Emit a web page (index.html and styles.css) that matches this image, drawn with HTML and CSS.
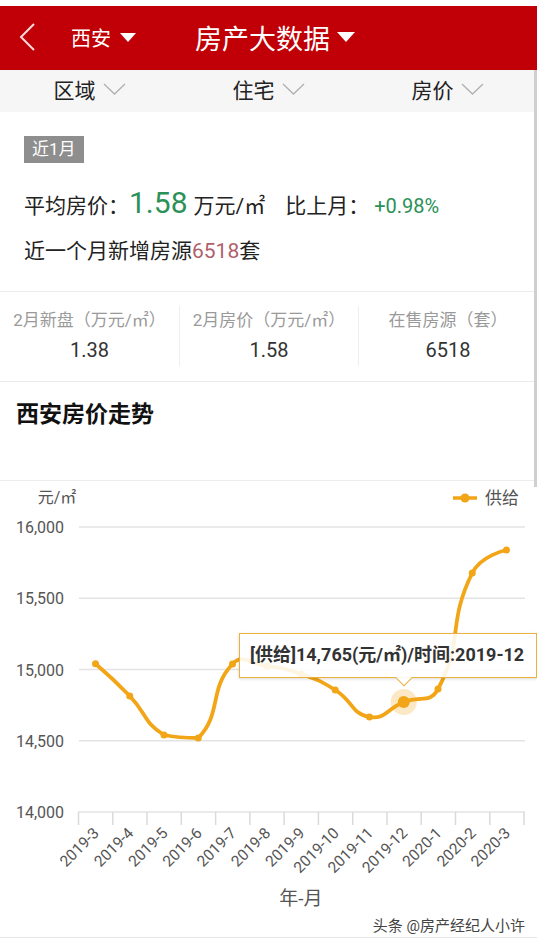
FILE: index.html
```html
<html><head>
<meta charset="utf-8">
<title>房产大数据</title>
<link rel="stylesheet" href="styles.css">
</head><body>
<div class="page">

<div class="statusgap"></div>

<header class="nav">
  <svg class="back" width="18" height="28" viewBox="0 0 18 28"><path d="M16 1 L3 14 L16 27"/></svg>
  <div class="city">西安<span class="caret"></span></div>
  <div class="title">房产大数据<span class="caret big"></span></div>
</header>

<div class="tabs">
  <div class="tab">区域<svg class="chev" width="23" height="12" viewBox="0 0 23 12"><path d="M1 1 L11.5 11 L22 1"/></svg></div>
  <div class="tab">住宅<svg class="chev" width="23" height="12" viewBox="0 0 23 12"><path d="M1 1 L11.5 11 L22 1"/></svg></div>
  <div class="tab">房价<svg class="chev" width="23" height="12" viewBox="0 0 23 12"><path d="M1 1 L11.5 11 L22 1"/></svg></div>
</div>

<div class="summary">
  <span class="tag">近1月</span>
  <div class="avg">平均房价：<span class="avg-num">1.58</span><span class="avg-unit">万元/㎡</span><span class="vs">比上月：</span><span class="pct">+0.98%</span></div>
  <div class="count">近一个月新增房源<span class="count-num">6518</span>套</div>
</div>

<div class="stats">
  <div class="stat"><div class="stat-label">2月新盘（万元/㎡）</div><div class="stat-value">1.38</div></div>
  <div class="stat"><div class="stat-label">2月房价（万元/㎡）</div><div class="stat-value">1.58</div></div>
  <div class="stat"><div class="stat-label">在售房源（套）</div><div class="stat-value">6518</div></div>
</div>

<div class="trend-title">西安房价走势</div>

<div class="chart">
  <svg class="plot" width="537" height="456" viewBox="0 480 537 456">
    <text class="unit" x="57" y="502" text-anchor="middle">元/㎡</text>
    <line class="legend-line" x1="453" y1="497" x2="477" y2="497"/>
    <circle class="dot" cx="465" cy="497" r="4.5"/>
    <text class="legend-text" x="485" y="503">供给</text>

    <line class="grid" x1="79" y1="526" x2="525" y2="526"/>
    <line class="grid" x1="79" y1="597.25" x2="525" y2="597.25"/>
    <line class="grid" x1="79" y1="668.5" x2="525" y2="668.5"/>
    <line class="grid" x1="79" y1="739.75" x2="525" y2="739.75"/>
    <line class="grid" x1="78" y1="811" x2="525" y2="811"/>

    <text class="ylabel" x="64" y="532" text-anchor="end">16,000</text>
    <text class="ylabel" x="64" y="603" text-anchor="end">15,500</text>
    <text class="ylabel" x="64" y="674.5" text-anchor="end">15,000</text>
    <text class="ylabel" x="64" y="745.5" text-anchor="end">14,500</text>
    <text class="ylabel" x="64" y="817" text-anchor="end">14,000</text>

    <g class="ticks">
      <line x1="78.5" y1="811" x2="78.5" y2="824"/>
      <line x1="112.8" y1="811" x2="112.8" y2="824"/>
      <line x1="147" y1="811" x2="147" y2="824"/>
      <line x1="181.3" y1="811" x2="181.3" y2="824"/>
      <line x1="215.6" y1="811" x2="215.6" y2="824"/>
      <line x1="249.9" y1="811" x2="249.9" y2="824"/>
      <line x1="284.1" y1="811" x2="284.1" y2="824"/>
      <line x1="318.4" y1="811" x2="318.4" y2="824"/>
      <line x1="352.7" y1="811" x2="352.7" y2="824"/>
      <line x1="387" y1="811" x2="387" y2="824"/>
      <line x1="421.2" y1="811" x2="421.2" y2="824"/>
      <line x1="455.5" y1="811" x2="455.5" y2="824"/>
      <line x1="489.8" y1="811" x2="489.8" y2="824"/>
      <line x1="524" y1="811" x2="524" y2="824"/>
    </g>

    <g class="xlabels">
      <text x="100" y="833" transform="rotate(-45 100 833)">2019-3</text>
      <text x="134.3" y="833" transform="rotate(-45 134.3 833)">2019-4</text>
      <text x="168.6" y="833" transform="rotate(-45 168.6 833)">2019-5</text>
      <text x="202.8" y="833" transform="rotate(-45 202.8 833)">2019-6</text>
      <text x="237.1" y="833" transform="rotate(-45 237.1 833)">2019-7</text>
      <text x="271.4" y="833" transform="rotate(-45 271.4 833)">2019-8</text>
      <text x="305.6" y="833" transform="rotate(-45 305.6 833)">2019-9</text>
      <text x="339.9" y="833" transform="rotate(-45 339.9 833)">2019-10</text>
      <text x="374.2" y="833" transform="rotate(-45 374.2 833)">2019-11</text>
      <text x="408.4" y="833" transform="rotate(-45 408.4 833)">2019-12</text>
      <text x="442.7" y="833" transform="rotate(-45 442.7 833)">2020-1</text>
      <text x="477" y="833" transform="rotate(-45 477 833)">2020-2</text>
      <text x="511.2" y="833" transform="rotate(-45 511.2 833)">2020-3</text>
    </g>

    <text class="axis-name" x="301" y="904" text-anchor="middle">年-月</text>

    <path class="series" d="M95.5,662.7 C95.5,662.7 113.45,678 129.75,695 C147.7,713.7 143.4,721.4 164,734 C177.7,737 188.05,737 198.25,737 C222.35,712 208.4,688.3 232.5,663 C242.6,652.3 249.85,662.5 266.75,665 C284.05,667.5 284.5,667.2 301,673 C318.7,679.2 319.35,679 335.25,689 C353.65,700.5 351.1,712.8 369.5,716 C385.3,718.8 386.45,708.1 403.75,701 C420.75,694.1 430.1,703 438,688 C464.3,638.5 446.65,623.8 472.25,572 C480.95,554.3 506.5,549 506.5,549"/>

    <g class="dots">
      <circle cx="95.5" cy="662.7" r="3.5"/>
      <circle cx="129.75" cy="695" r="3.5"/>
      <circle cx="164" cy="734" r="3.5"/>
      <circle cx="198.25" cy="737" r="3.5"/>
      <circle cx="232.5" cy="663" r="3.5"/>
      <circle cx="266.75" cy="665" r="3.5"/>
      <circle cx="301" cy="673" r="3.5"/>
      <circle cx="335.25" cy="689" r="3.5"/>
      <circle cx="369.5" cy="716" r="3.5"/>
      <circle cx="438" cy="688" r="3.5"/>
      <circle cx="472.25" cy="572" r="3.5"/>
      <circle cx="506.5" cy="549" r="3.5"/>
    </g>
    <circle class="halo" cx="403.75" cy="701" r="13"/>
    <circle class="dot" cx="403.75" cy="701" r="6"/>
  </svg>

  <div class="tooltip">[供给]14,765(元/㎡)/时间:2019-12</div>
  <div class="watermark">头条 @房产经纪人小许</div>
</div>

<div class="footer"></div>

<div class="scrollbar"></div>
</div>
</body></html>
```

FILE: styles.css
```css
body {
  margin:0;
  background-color:#ffffff;
  color:#222222;
  font-family:Roboto, "Noto Sans CJK SC", sans-serif;
}
.page {
  position:relative;
  width:537px;
}
.statusgap {
  height:6px;
}

/* red title bar */
.nav {
  height:64px;
  background-color:#c00006;
  color:#ffffff;
  display:flex;
  align-items:center;
  padding-left:18px;
  padding-bottom:2px;
  box-sizing:border-box;
}
.back path {
  fill:none;
  stroke:#f4dcdc;
  stroke-width:2;
}
.city {
  margin-left:35px;
  font-size:20px;
  display:flex;
  align-items:center;
}
.title {
  margin-left:59px;
  font-size:27px;
  display:flex;
  align-items:center;
}
.caret {
  margin-left:9px;
  border-left:8px solid transparent;
  border-right:8px solid transparent;
  border-top:9px solid #ffffff;
}
.caret.big {
  margin-left:7px;
  border-left:9px solid transparent;
  border-right:9px solid transparent;
  border-top:10px solid #ffffff;
}

/* filter tabs */
.tabs {
  height:42px;
  box-sizing:border-box;
  padding-bottom:4px;
  background-color:#f6f6f6;
  display:grid;
  grid-template-columns:1fr 1fr 1fr;
}
.tab {
  display:flex;
  align-items:center;
  justify-content:center;
  gap:7px;
  font-size:21px;
  color:#222222;
}
.chev path {
  fill:none;
  stroke:#b0b0b0;
  stroke-width:1.3;
}

/* summary block */
.summary {
  padding:24px 0 25px 24px;
}
.tag {
  display:inline-block;
  background-color:#8e8e8e;
  color:#ffffff;
  font-size:17px;
  line-height:27px;
  padding:0 8px;
}
.avg {
  margin-top:20px;
  line-height:40px;
  font-size:21px;
}
.avg-num {
  font-size:30px;
  color:#2b9158;
}
.avg-unit {
  margin-left:6px;
}
.vs {
  margin-left:20px;
}
.pct {
  margin-left:5px;
  font-size:20px;
  color:#2b9158;
}
.count {
  margin-top:10px;
  line-height:30px;
  font-size:21px;
}
.count-num {
  color:#b0606a;
}

/* three stat columns */
.stats {
  border-top:1.5px solid #ebebeb;
  border-bottom:1.5px solid #ebebeb;
  padding:14px 0 15px 0;
  display:grid;
  grid-template-columns:1fr 1fr 1fr;
}
.stat {
  text-align:center;
  border-left:1.5px solid #eeeeee;
}
.stat:first-child {
  border-left:none;
}
.stat-label {
  font-size:17px;
  line-height:28px;
  color:#9a9a9a;
}
.stat-value {
  font-size:20px;
  line-height:32px;
  color:#333333;
}

.trend-title {
  padding:17px 16px 49px 16px;
  font-size:23px;
  line-height:32px;
  font-weight:bold;
  color:#111111;
  border-bottom:1.5px solid #ececec;
}

/* chart */
.chart {
  position:relative;
  height:456px;
  border-bottom:1.5px solid #e6e6e6;
}
.plot {
  display:block;
}
.unit, .ylabel {
  font-size:16px;
  fill:#555555;
}
.legend-text {
  font-size:17px;
  fill:#555555;
}
.legend-line {
  stroke:#f2a516;
  stroke-width:3.5;
}
.grid {
  stroke:#e3e3e3;
  stroke-width:1.5;
}
.ticks line {
  stroke:#dadada;
  stroke-width:1.5;
}
.xlabels text {
  font-size:15.5px;
  fill:#555555;
  text-anchor:end;
}
.axis-name {
  font-size:19px;
  fill:#555555;
}
.series {
  fill:none;
  stroke:#f2a516;
  stroke-width:3.8;
  stroke-linejoin:round;
}
.dots circle, .dot {
  fill:#f2a516;
}
.halo {
  fill:#f2a516;
  opacity:0.25;
}
.tooltip {
  position:absolute;
  left:239px;
  top:152px;
  width:298px;
  height:45px;
  box-sizing:border-box;
  padding-left:10px;
  border:1.5px solid #eab040;
  background-color:rgba(255,255,255,0.88);
  box-shadow:0 1px 3px rgba(0,0,0,0.15);
  font-size:18px;
  font-weight:bold;
  line-height:42px;
  color:#333333;
  white-space:nowrap;
}
.tooltip::after {
  content:"";
  position:absolute;
  left:158px;
  bottom:-7px;
  width:11px;
  height:11px;
  background-color:rgba(255,255,255,0.9);
  border-right:1.5px solid #eab040;
  border-bottom:1.5px solid #eab040;
  transform:rotate(45deg);
}
.watermark {
  position:absolute;
  right:12px;
  bottom:2px;
  font-size:15px;
  color:#444444;
  text-shadow:0 0 2px #ffffff;
}
.footer {
  height:10px;
  border-bottom:1.5px solid #ececec;
}
.scrollbar {
  position:absolute;
  left:534px;
  top:70px;
  width:3px;
  height:417px;
  background-color:#cfcfcf;
}
```
